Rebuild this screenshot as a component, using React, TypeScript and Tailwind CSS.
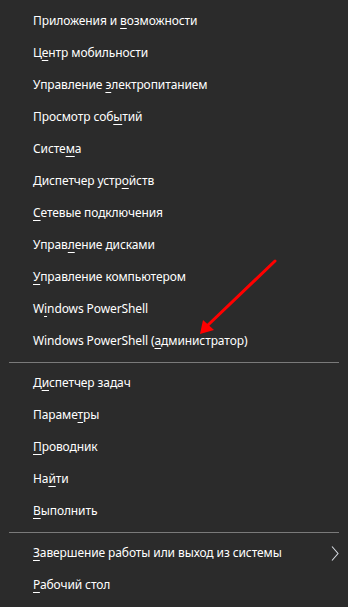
import React from "react";

type Item = { pre: string; key: string; post: string; arrow?: boolean };

const groups: Item[][] = [
  [
    { pre: "Приложения и ", key: "в", post: "озможности" },
    { pre: "Ц", key: "е", post: "нтр мобильности" },
    { pre: "Управление ", key: "э", post: "лектропитанием" },
    { pre: "Просмотр соб", key: "ы", post: "тий" },
    { pre: "Систе", key: "м", post: "а" },
    { pre: "Диспетчер устр", key: "о", post: "йств" },
    { pre: "", key: "С", post: "етевые подключения" },
    { pre: "Управ", key: "л", post: "ение дисками" },
    { pre: "", key: "У", post: "правление компьютером" },
    { pre: "W", key: "i", post: "ndows PowerShell" },
    { pre: "Windows PowerShell (", key: "а", post: "дминистратор)" },
  ],
  [
    { pre: "Д", key: "и", post: "спетчер задач" },
    { pre: "Параме", key: "т", post: "ры" },
    { pre: "", key: "П", post: "роводник" },
    { pre: "На", key: "й", post: "ти" },
    { pre: "", key: "В", post: "ыполнить" },
  ],
  [
    { pre: "", key: "З", post: "авершение работы или выход из системы", arrow: true },
    { pre: "", key: "Р", post: "абочий стол" },
  ],
];

function Row({ item }: { item: Item }) {
  return (
    <div className="h-8 flex items-center pl-[33px] pr-[9px]">
      <span className="flex-1 whitespace-nowrap">
        {item.pre}
        <span className="underline underline-offset-[3px]">{item.key}</span>
        {item.post}
      </span>
      {item.arrow && (
        <svg width="8" height="15" viewBox="0 0 8 15">
          <path d="M1 0.5 L7 7.5 L1 14.5" fill="none" stroke="#d6dbe2" strokeWidth="1.1" />
        </svg>
      )}
    </div>
  );
}

export default function App() {
  return (
    <div
      className="relative w-[348px] h-[607px] bg-[#2b2b2b] text-white text-[12px] tracking-[-0.1px] py-[5px] overflow-hidden"
      style={{ fontFamily: '"Segoe UI", "Noto Sans", sans-serif' }}
    >
      {groups.map((g, gi) => (
        <div key={gi}>
          {gi > 0 && (
            <div className="h-[10px] flex items-center px-[9px]">
              <div className="h-px w-full bg-[#7a7a7a]" />
            </div>
          )}
          {g.map((item, i) => (
            <Row key={i} item={item} />
          ))}
        </div>
      ))}

      {/* red arrow pointing at the admin item */}
      <svg className="absolute left-0 top-0 pointer-events-none" width="348" height="607">
        <line x1="275" y1="261" x2="207" y2="326" stroke="#ff0000" strokeWidth="3" strokeLinecap="round" />
        <polygon points="200,334 203,320 214,330" fill="#ff0000" />
      </svg>
    </div>
  );
}
